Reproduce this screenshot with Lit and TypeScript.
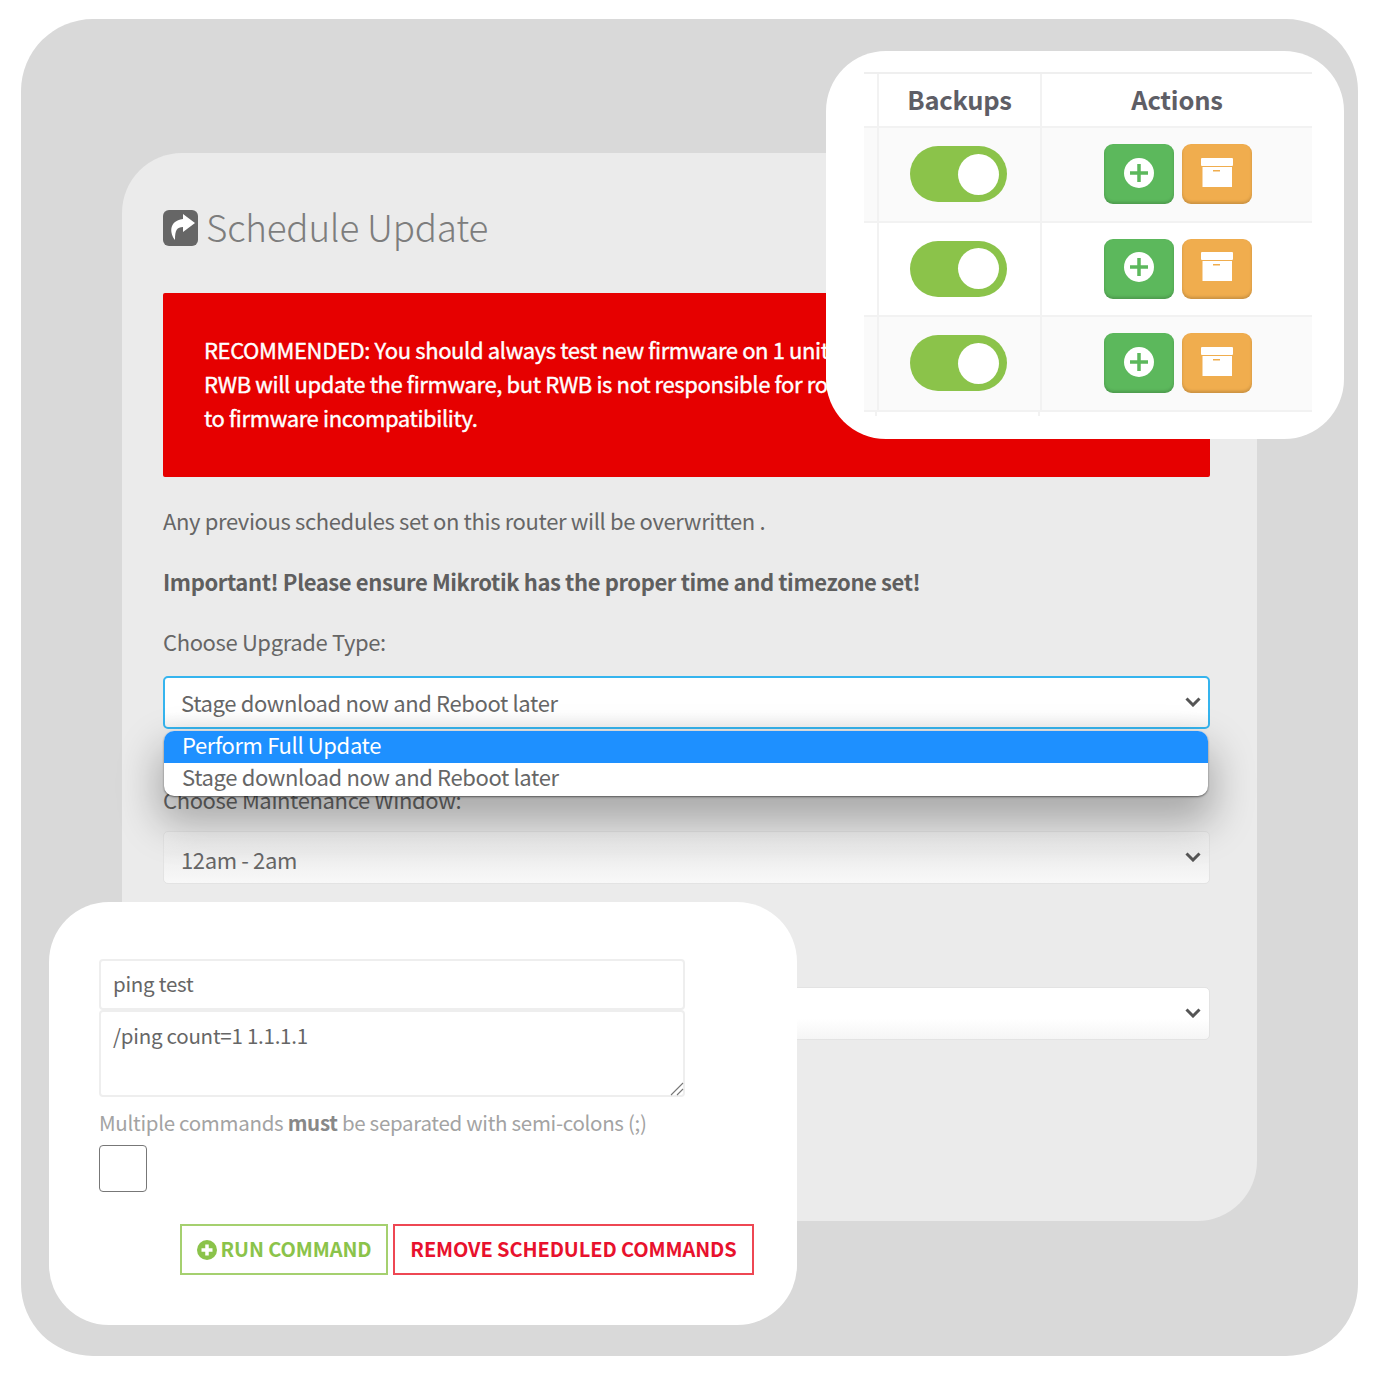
import { LitElement, html, css } from "lit";
import { customElement } from "lit/decorators.js";

const chevron = html`<svg class="chev" viewBox="0 0 16 10" width="16" height="10"><path d="M1.5 1.5 8 8l6.500-6.500" fill="none" stroke="#555" stroke-width="3"/></svg>`;

@customElement("app-root")
export class AppRoot extends LitElement {
  static styles = css`
    :host { display: block; width: 1375px; height: 1375px; background: #fff; position: relative; overflow: hidden;
      font-family: "Noto Sans CJK SC", "Source Sans Pro", "Noto Sans", sans-serif; color: #666; }
    * { box-sizing: border-box; }
    .back { position: absolute; left: 21px; top: 19px; width: 1337px; height: 1337px; background: #d9d9d9; border-radius: 72px; }
    .card { position: absolute; left: 122px; top: 153px; width: 1135px; height: 1068px; background: #ebebeb; border-radius: 60px;
      padding: 53px 47px 0 41px; display: flex; flex-direction: column; }
    .title { display: flex; align-items: center; gap: 8px; height: 44px; font-size: 36.800px; font-weight: 300; color: #7d7d7d; letter-spacing: -.2px; }
    .title svg { flex: none; }
    .title span { margin-top: -5px; }
    .alert { margin-top: 43px; height: 184px; background: #e60000; border-radius: 2px; color: #fff; padding: 39px 41px 0; font-size: 22px; line-height: 34px; letter-spacing: -.38px; -webkit-text-stroke: .4px #fff; }
    p { margin: 0; font-size: 22px; line-height: 30px; color: #666; letter-spacing: -.37px; }
    .any { margin-top: 28px; }
    .imp { margin-top: 31px; font-weight: 700; color: #5f5f5f; letter-spacing: -.4px; }
    .lab { margin-top: 30px; }
    .field { position: relative; height: 53px; margin-top: 20px; }
    select { appearance: none; -webkit-appearance: none; display: block; width: 100%; height: 100%; font: inherit; font-size: 22px; letter-spacing: -.37px; color: #666; padding: 0 0 2px 17px; border: 1px solid #e3e3e3; border-radius: 5px; outline: none; background: linear-gradient(#f0f0f0, #ededed 40%, #f8f8f8); }
    .focus select { border: 2px solid #35b4ee; padding-left: 16px; background: linear-gradient(#fff 70%, #f3f3f3); }
    .f2 select { padding: 3px 0 0 17px; }
    .white select { background: linear-gradient(#fff 60%, #f5f5f5); }
    .chev { position: absolute; right: 9px; top: 21px; pointer-events: none; }
    .popup { position: absolute; left: 1px; right: 2px; top: 55px; height: 65px; border-radius: 10px; background: #fff; font-size: 22px; letter-spacing: -.37px; line-height: 26px; color: #666; box-shadow: 0 1px 2px rgba(0,0,0,.5), 0 22px 40px 6px rgba(0,0,0,.28); z-index: 2; }
    .opt { height: 33px; padding-left: 18px; border-radius: 0 0 10px 10px; }
    .opt.on { height: 32px; background: #1e90ff; color: #fff; border-radius: 10px 10px 0 0; }
    .lab2 { margin-top: 58px; line-height: 24px; }
    .f2 { margin-top: 20px; height: 53px; }
    .f3 { margin-top: 103px; }

    .panel { position: absolute; background: #fff; }
    .tbl { left: 826px; top: 51px; width: 518px; height: 388px; border-radius: 60px; padding: 21px 32px 0 38px; }
    .grid { display: grid; grid-template-columns: 13px 163px 272px; border-top: 2px solid #efefef; position: relative; }
    .cell { display: flex; align-items: center; justify-content: center; border-left: 2px solid #f2f2f2; border-bottom: 2px solid #f2f2f2; height: 94.500px; gap: 8px; }
    .cell:nth-child(3n+1) { border-left: 0; }
    .hd { height: 54px; font-size: 25.500px; font-weight: 700; color: #5e5e66; letter-spacing: -.2px; }
    .hd span { margin-top: -3px; }
    .alt { background: #fafafa; }
    .tcell { padding-right: 2px; }
    .acell { padding-left: 2px; }
    .tog { width: 97px; height: 56px; border-radius: 28px; background: #8bc34a; display: flex; align-items: center; justify-content: flex-end; padding-right: 8px; }
    .tog i { display: block; width: 41px; height: 41px; border-radius: 50%; background: #fff; }
    .btn { width: 70px; height: 60px; border-radius: 9px; display: flex; align-items: center; justify-content: center; box-shadow: inset 0 -2px 3px rgba(0,0,0,.16); padding-bottom: 3px; }
    .g { background: #5cb85c; } .o { background: #f0ad4e; }
    .stub { display: grid; grid-template-columns: 13px 163px; height: 4px; }
    .stub span { border-right: 2px solid #f2f2f2; }

    .form { left: 49px; top: 902px; width: 748px; height: 423px; border-radius: 60px; padding: 57px 43px 0 50px; display: flex; flex-direction: column; }
    input, textarea { display: block; width: 586px; font: inherit; font-size: 20.500px; letter-spacing: -.25px; color: #666; border: 2px solid #eeeeee; border-radius: 4px; padding: 0 12px; outline: none; background: #fff; }
    input { height: 51px; padding-bottom: 3px; }
    .ta { position: relative; width: 586px; height: 87px; }
    textarea { height: 87px; padding-top: 6px; resize: none; line-height: 34px; }
    .grip { position: absolute; right: 1px; bottom: 1px; }
    .help { margin-top: 10px; font-size: 20.500px; line-height: 30px; color: #a3a3a3; letter-spacing: -.3px; }
    .help b { color: #888; }
    .box { margin-top: 8px; width: 48px; height: 47px; border: 1.500px solid #777; border-radius: 4px; background: #fff; }
    .acts { display: flex; gap: 5px; margin-top: 32px; margin-left: 81px; }
    .acts button { height: 51px; font: inherit; font-size: 20px; font-weight: 700; background: #fff; border-radius: 0; display: flex; align-items: center; justify-content: center; gap: 4px; padding: 0 0 2px; letter-spacing: -.1px; }
    .acts svg { margin-top: 2px; }
    .run { width: 208px; color: #8bc34a; border: 2px solid #a5d06f; }
    .rem { width: 361px; color: #e8112d; border: 2px solid #ee4753; }
  `;

  private row(alt: boolean) {
    const c = alt ? "alt" : "";
    return html`
      <div class="cell ${c}"></div>
      <div class="cell tcell ${c}"><div class="tog"><i></i></div></div>
      <div class="cell acell ${c}">
        <div class="btn g"><svg width="30" height="30" viewBox="0 0 30 30"><circle cx="15" cy="15" r="15" fill="#fff"/><path d="M15 6v18M6 15h18" stroke="#5cb85c" stroke-width="3.500"/></svg></div>
        <div class="btn o"><svg width="32" height="30" viewBox="0 0 32 30"><rect x="0" y="0" width="32" height="8" rx="1" fill="#fff"/><rect x="1.500" y="9" width="29.500" height="20" fill="#fff"/><rect x="12" y="12" width="7" height="1.500" fill="#f0ad4e"/></svg></div>
      </div>`;
  }

  render() {
    return html`
      <div class="back"></div>
      <section class="card">
        <div class="title">
          <svg width="35" height="36" viewBox="0 0 35 36"><rect width="35" height="36" rx="6" fill="#666"/><path d="M20 4 32 13 20 22v-5c-6 0-8 3-8 13C7 24 5 11 20 9Z" fill="#fff"/></svg>
          <span>Schedule Update</span>
        </div>
        <div class="alert">RECOMMENDED: You should always test new firmware on 1 unit first.<br>RWB will update the firmware, but RWB is not responsible for routers that fail due<br>to firmware incompatibility.</div>
        <p class="any">Any previous schedules set on this router will be overwritten .</p>
        <p class="imp">Important! Please ensure Mikrotik has the proper time and timezone set!</p>
        <p class="lab">Choose Upgrade Type:</p>
        <div class="field focus">
          <select><option>Stage download now and Reboot later</option><option>Perform Full Update</option></select>
          ${chevron}
          <div class="popup"><div class="opt on">Perform Full Update</div><div class="opt">Stage download now and Reboot later</div></div>
        </div>
        <p class="lab2">Choose Maintenance Window:</p>
        <div class="field f2"><select><option>12am - 2am</option></select>${chevron}</div>
        <div class="field f2 f3 white"><select><option></option></select>${chevron}</div>
      </section>

      <section class="panel tbl">
        <div class="grid">
          <div class="cell hd"></div><div class="cell hd"><span>Backups</span></div><div class="cell hd"><span>Actions</span></div>
          ${this.row(true)}${this.row(false)}${this.row(true)}
        </div>
        <div class="stub"><span></span><span></span></div>
      </section>

      <section class="panel form">
        <input value="ping test" />
        <div class="ta">
          <textarea>/ping count=1 1.1.1.1</textarea>
          <svg class="grip" width="14" height="14" viewBox="0 0 14 14"><path d="M1 13 13 1M7 13l6-6" stroke="#777" stroke-width="1.100"/></svg>
        </div>
        <div class="help">Multiple commands <b>must</b> be separated with semi-colons (;)</div>
        <div class="box"></div>
        <div class="acts">
          <button class="run"><svg width="20" height="20" viewBox="0 0 20 20"><circle cx="10" cy="10" r="10" fill="#8bc34a"/><path d="M10 4.500v11M4.500 10h11" stroke="#fff" stroke-width="3.500"/></svg>RUN COMMAND</button>
          <button class="rem">REMOVE SCHEDULED COMMANDS</button>
        </div>
      </section>
    `;
  }
}
